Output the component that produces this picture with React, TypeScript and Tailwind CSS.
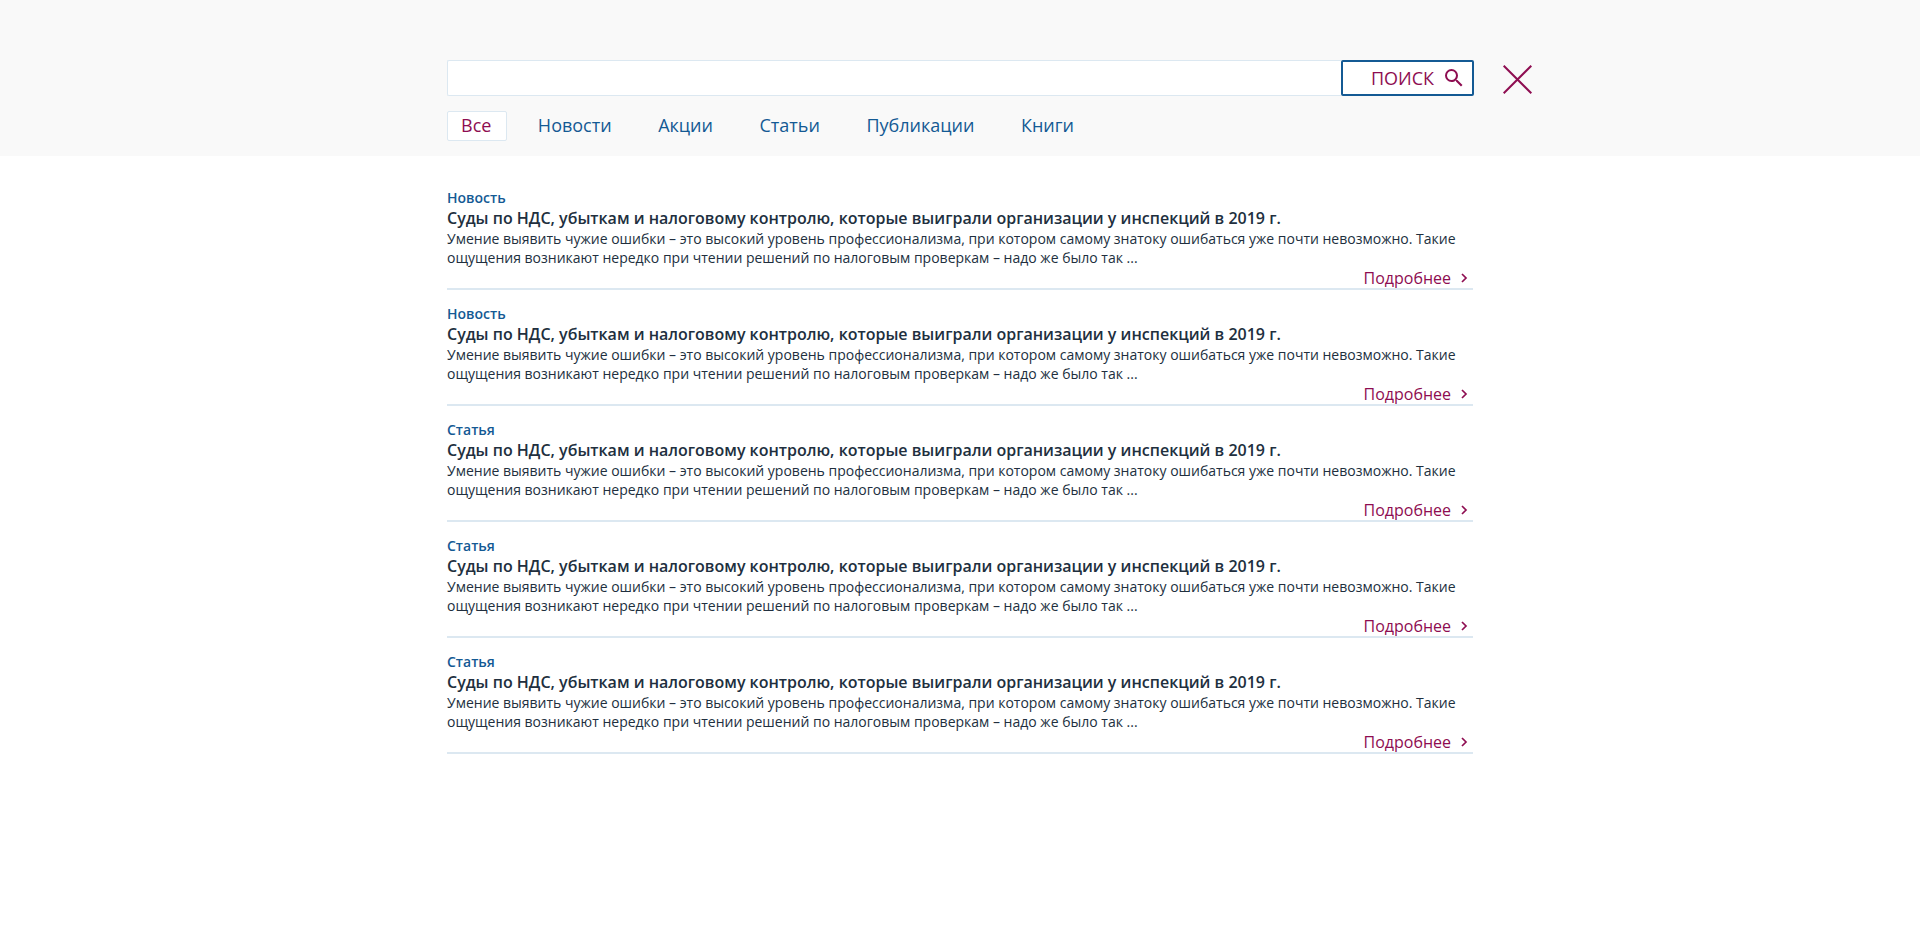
const TABS = ['Все', 'Новости', 'Акции', 'Статьи', 'Публикации', 'Книги'];
const KINDS = ['Новость', 'Новость', 'Статья', 'Статья', 'Статья'];

function SearchIcon() {
  return (
    <svg className="h-[24px] w-[24px] shrink-0" viewBox="0 0 24 24" fill="currentColor">
      <path d="M15.5 14h-.79l-.28-.27A6.471 6.471 0 0 0 16 9.5 6.5 6.5 0 1 0 9.5 16c1.61 0 3.09-.59 4.23-1.57l.27.28v.79l5 4.99L20.49 19l-4.99-5zm-6 0C7.01 14 5 11.99 5 9.5S7.01 5 9.5 5 14 7.01 14 9.5 11.99 14 9.5 14z" />
    </svg>
  );
}

function Result({ kind }: { kind: string }) {
  return (
    <article className="flex h-[116px] flex-col border-b-2 border-[#dce8f1] pt-[14px] text-[#212f3e]">
      <div className="text-[14px] leading-[19px] font-semibold text-[#145a94]">{kind}</div>
      <h2 className="text-[16px] leading-[22px] font-semibold">
        Суды по НДС, убыткам и налоговому контролю, которые выиграли организации у инспекций в 2019 г.
      </h2>
      <p className="text-[14px] leading-[19px]">
        Умение выявить чужие ошибки – это высокий уровень профессионализма, при котором самому знатоку ошибаться уже
        почти невозможно. Такие ощущения возникают нередко при чтении решений по налоговым проверкам – надо же было так
        ...
      </p>
      <a className="flex items-center justify-end text-[16px] leading-[22px] text-[#8e0d51]">
        Подробнее
        <svg className="mr-[5px] ml-[10px] h-[10px] w-[7px]" viewBox="0 0 7 10" fill="none" stroke="currentColor" strokeWidth="1.7">
          <path d="M1 1l4 4-4 4" />
        </svg>
      </a>
    </article>
  );
}

export default function App() {
  return (
    <div className="min-h-[940px] bg-white font-['Open_Sans',sans-serif]">
      <header className="h-[156px] bg-[#f9f9f9] pt-[60px]">
        <div className="ml-[447px] flex items-center">
          <input className="h-[36px] w-[894px] rounded-l-[2px] border border-r-0 border-[#dce8f1] bg-white px-3 outline-none" />
          <button className="flex h-[36px] w-[133px] items-center justify-end rounded-[2px] border-2 border-[#145a94] bg-white pr-[6px] text-[18px] text-[#8e0d51]">
            ПОИСК
            <span className="ml-[8px]">
              <SearchIcon />
            </span>
          </button>
          <svg className="mt-[3px] ml-[29px] h-[29px] w-[29px] text-[#8e0d51]" viewBox="0 0 29 29" fill="none" stroke="currentColor" strokeWidth="2">
            <path d="M.7.7l27.6 27.6M28.3.7L.7 28.3" />
          </svg>
        </div>
        <nav className="mt-[15px] ml-[447px] flex gap-[17px] text-[18px] leading-[26px]">
          {TABS.map((tab, i) => (
            <a
              key={tab}
              className={
                i === 0
                  ? 'h-[30px] rounded-[2px] border border-[#dce8f1] bg-white pr-[14.5px] pl-[13px] text-[#8e0d51]'
                  : 'h-[30px] border border-transparent pr-[14.5px] pl-[13px] text-[#145a94]'
              }
            >
              {tab}
            </a>
          ))}
        </nav>
      </header>
      <main className="ml-[447px] w-[1026px] pt-[18px]">
        {KINDS.map((kind, i) => (
          <Result key={i} kind={kind} />
        ))}
      </main>
    </div>
  );
}
